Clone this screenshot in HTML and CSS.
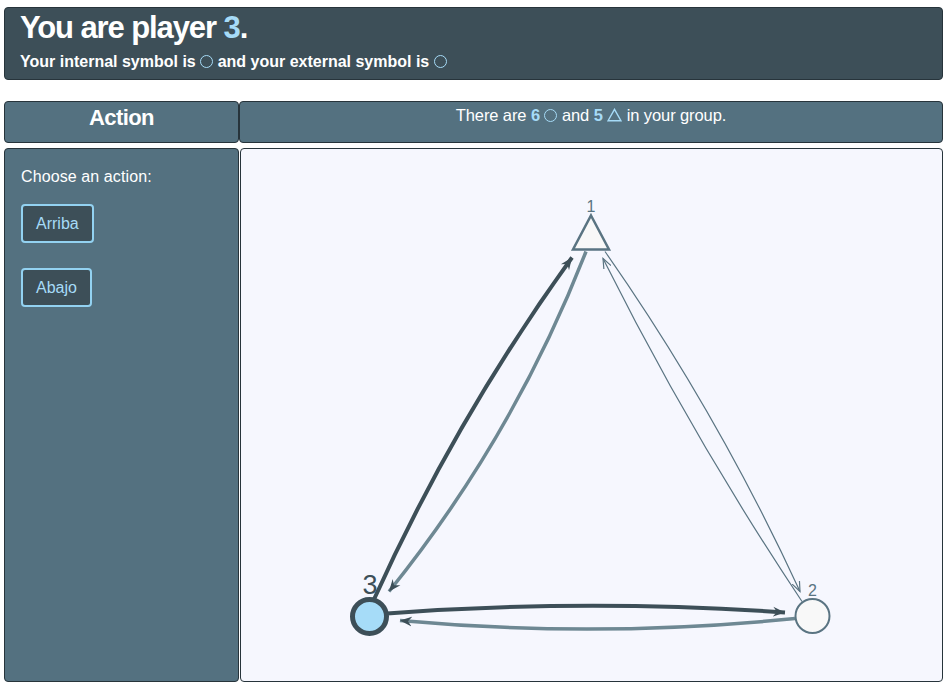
FILE: index.html
```html
<!DOCTYPE html>
<html>
<head>
<meta charset="utf-8">
<link rel="stylesheet" href="styles.css">
</head>
<body>
<header class="header">
  <h1 class="title">You are player <span class="hl">3</span>.</h1>
  <p class="subtitle">Your internal symbol is <span class="sym-circle"></span> and your external symbol is <span class="sym-circle"></span></p>
</header>

<div class="row row-head">
  <div class="box box-action"><h2 class="action-title">Action</h2></div>
  <div class="box box-info">There are <b class="hl">6</b> <span class="sym-circle thin"></span> and <b class="hl">5</b> <svg class="sym-tri" viewBox="0 0 14 13"><path d="M7 1.2 L13 11.8 L1 11.8 Z"/></svg> in your group.</div>
</div>

<div class="row row-main">
  <div class="box panel-left">
    <p class="prompt">Choose an action:</p>
    <button class="btn">Arriba</button>
    <button class="btn">Abajo</button>
  </div>
  <div class="box panel-graph">
    <svg class="graph" viewBox="241 148 701 531">
      <defs>
        <marker id="arr-dark" markerUnits="userSpaceOnUse" markerWidth="14" markerHeight="12" refX="12" refY="6" orient="auto">
          <path d="M0,1 L12,6 L0,11 L4,6 Z" fill="#3d4f58"/>
        </marker>
        <marker id="arr-gray" markerUnits="userSpaceOnUse" markerWidth="14" markerHeight="12" refX="12" refY="6" orient="auto">
          <path d="M0,1 L12,6 L0,11 L4,6 Z" fill="#3d4f58"/>
        </marker>
        <marker id="arr-thin" markerUnits="userSpaceOnUse" markerWidth="12" markerHeight="10" refX="10" refY="5" orient="auto">
          <path d="M0,1 L10,5 L0,9" fill="none" stroke="#5a7482" stroke-width="1.2"/>
        </marker>
      </defs>
      <!-- 3 -> 1 -->
      <path d="M373,600 Q455,418 572,256" class="e-dark" marker-end="url(#arr-dark)"/>
      <!-- 1 -> 3 -->
      <path d="M586,250 Q514,435 389,590" class="e-gray" marker-end="url(#arr-gray)"/>
      <!-- 1 -> 2 -->
      <path d="M605,250 Q717,410 800,590" class="e-thin" marker-end="url(#arr-thin)"/>
      <!-- 2 -> 1 -->
      <path d="M802,600 Q692,435 603,257" class="e-thin" marker-end="url(#arr-thin)"/>
      <!-- 3 -> 2 -->
      <path d="M387,612 Q586,597 785,611" class="e-dark" marker-end="url(#arr-dark)"/>
      <!-- 2 -> 3 -->
      <path d="M795,617 Q597,637 400,619" class="e-gray" marker-end="url(#arr-gray)"/>

      <path d="M591,214 L609,248 L573,248 Z" class="node-tri"/>
      <circle cx="812.5" cy="614.5" r="17" class="node-2"/>
      <circle cx="369.5" cy="615" r="17" class="node-3"/>

      <text x="591" y="210" class="lbl lbl-small">1</text>
      <text x="812.5" y="594" class="lbl lbl-small">2</text>
      <text x="370" y="592" class="lbl lbl-big">3</text>
    </svg>
  </div>
</div>
</body>
</html>
```

FILE: styles.css
```css
* { box-sizing: border-box; }

html, body {
  margin: 0;
  background: #ffffff;
}

body {
  padding: 7px 4px 0 4px;
  font-family: "Liberation Sans", Arial, sans-serif;
  color: #ffffff;
}

.hl { color: #a6dbf7; }

.header {
  height: 73px;
  background: #3d4f58;
  border: 1px solid #27343b;
  border-radius: 4px;
  padding: 2px 15px 0 15px;
}

.title {
  margin: 0;
  font-size: 31px;
  line-height: 36px;
  font-weight: bold;
  letter-spacing: -1.1px;
}

.subtitle {
  margin: 6px 0 0 0;
  font-size: 16px;
  line-height: 19px;
  font-weight: bold;
  letter-spacing: 0;
}

.sym-circle {
  display: inline-block;
  width: 13px;
  height: 13px;
  border: 1.5px solid #a6dbf7;
  border-radius: 50%;
  vertical-align: -1px;
}

.sym-circle.thin { border-width: 1.3px; }

.sym-tri {
  display: inline-block;
  width: 15px;
  height: 14px;
  vertical-align: -1px;
}

.sym-tri path {
  fill: none;
  stroke: #a6dbf7;
  stroke-width: 1.3;
}

.row {
  display: grid;
  grid-template-columns: 235px 1fr;
}

.row-head {
  margin-top: 21px;
  height: 42px;
}

.row-main {
  margin-top: 5px;
  height: 534px;
}

.box {
  border: 1px solid #27343b;
  border-radius: 4px;
  background: #547180;
}

.box-action {
  display: flex;
  justify-content: center;
  padding-top: 3px;
}

.action-title {
  margin: 0;
  font-size: 22px;
  line-height: 26px;
  font-weight: bold;
  letter-spacing: -0.6px;
}

.box-info {
  text-align: center;
  font-size: 16.5px;
  line-height: 18px;
  padding-top: 4px;
  letter-spacing: -0.1px;
}

.box-info b { font-weight: bold; }

.panel-left {
  padding: 18px 16px;
  display: flex;
  flex-direction: column;
  align-items: flex-start;
}

.prompt {
  margin: 0 0 17px 0;
  font-size: 16px;
  line-height: 20px;
  letter-spacing: 0.1px;
}

.btn {
  font-family: "Liberation Sans", Arial, sans-serif;
  font-size: 16px;
  line-height: 19px;
  color: #a6dbf7;
  background: #3d4f58;
  border: 2px solid #93d2f1;
  border-radius: 4px;
  padding: 8px 13px;
  margin: 0 0 25px 0;
  letter-spacing: 0;
}

.panel-graph {
  background: #f6f7fe;
  margin-left: 1px;
  overflow: hidden;
}

.graph {
  display: block;
  width: 100%;
  height: 100%;
}

.e-dark {
  fill: none;
  stroke: #3d4f58;
  stroke-width: 4;
}

.e-gray {
  fill: none;
  stroke: #6e8893;
  stroke-width: 3.5;
}

.e-thin {
  fill: none;
  stroke: #5a7482;
  stroke-width: 1.2;
}

.node-tri {
  fill: #f8f8f8;
  stroke: #5a7482;
  stroke-width: 2.5;
  stroke-linejoin: miter;
}

.node-2 {
  fill: #f8f8f8;
  stroke: #5a7482;
  stroke-width: 2;
}

.node-3 {
  fill: #a6dcf8;
  stroke: #3d4f58;
  stroke-width: 5;
}

.lbl {
  font-family: "Liberation Sans", Arial, sans-serif;
  text-anchor: middle;
}

.lbl-small {
  font-size: 16px;
  fill: #5a7482;
}

.lbl-big {
  font-size: 27px;
  fill: #3d4f58;
}
```
